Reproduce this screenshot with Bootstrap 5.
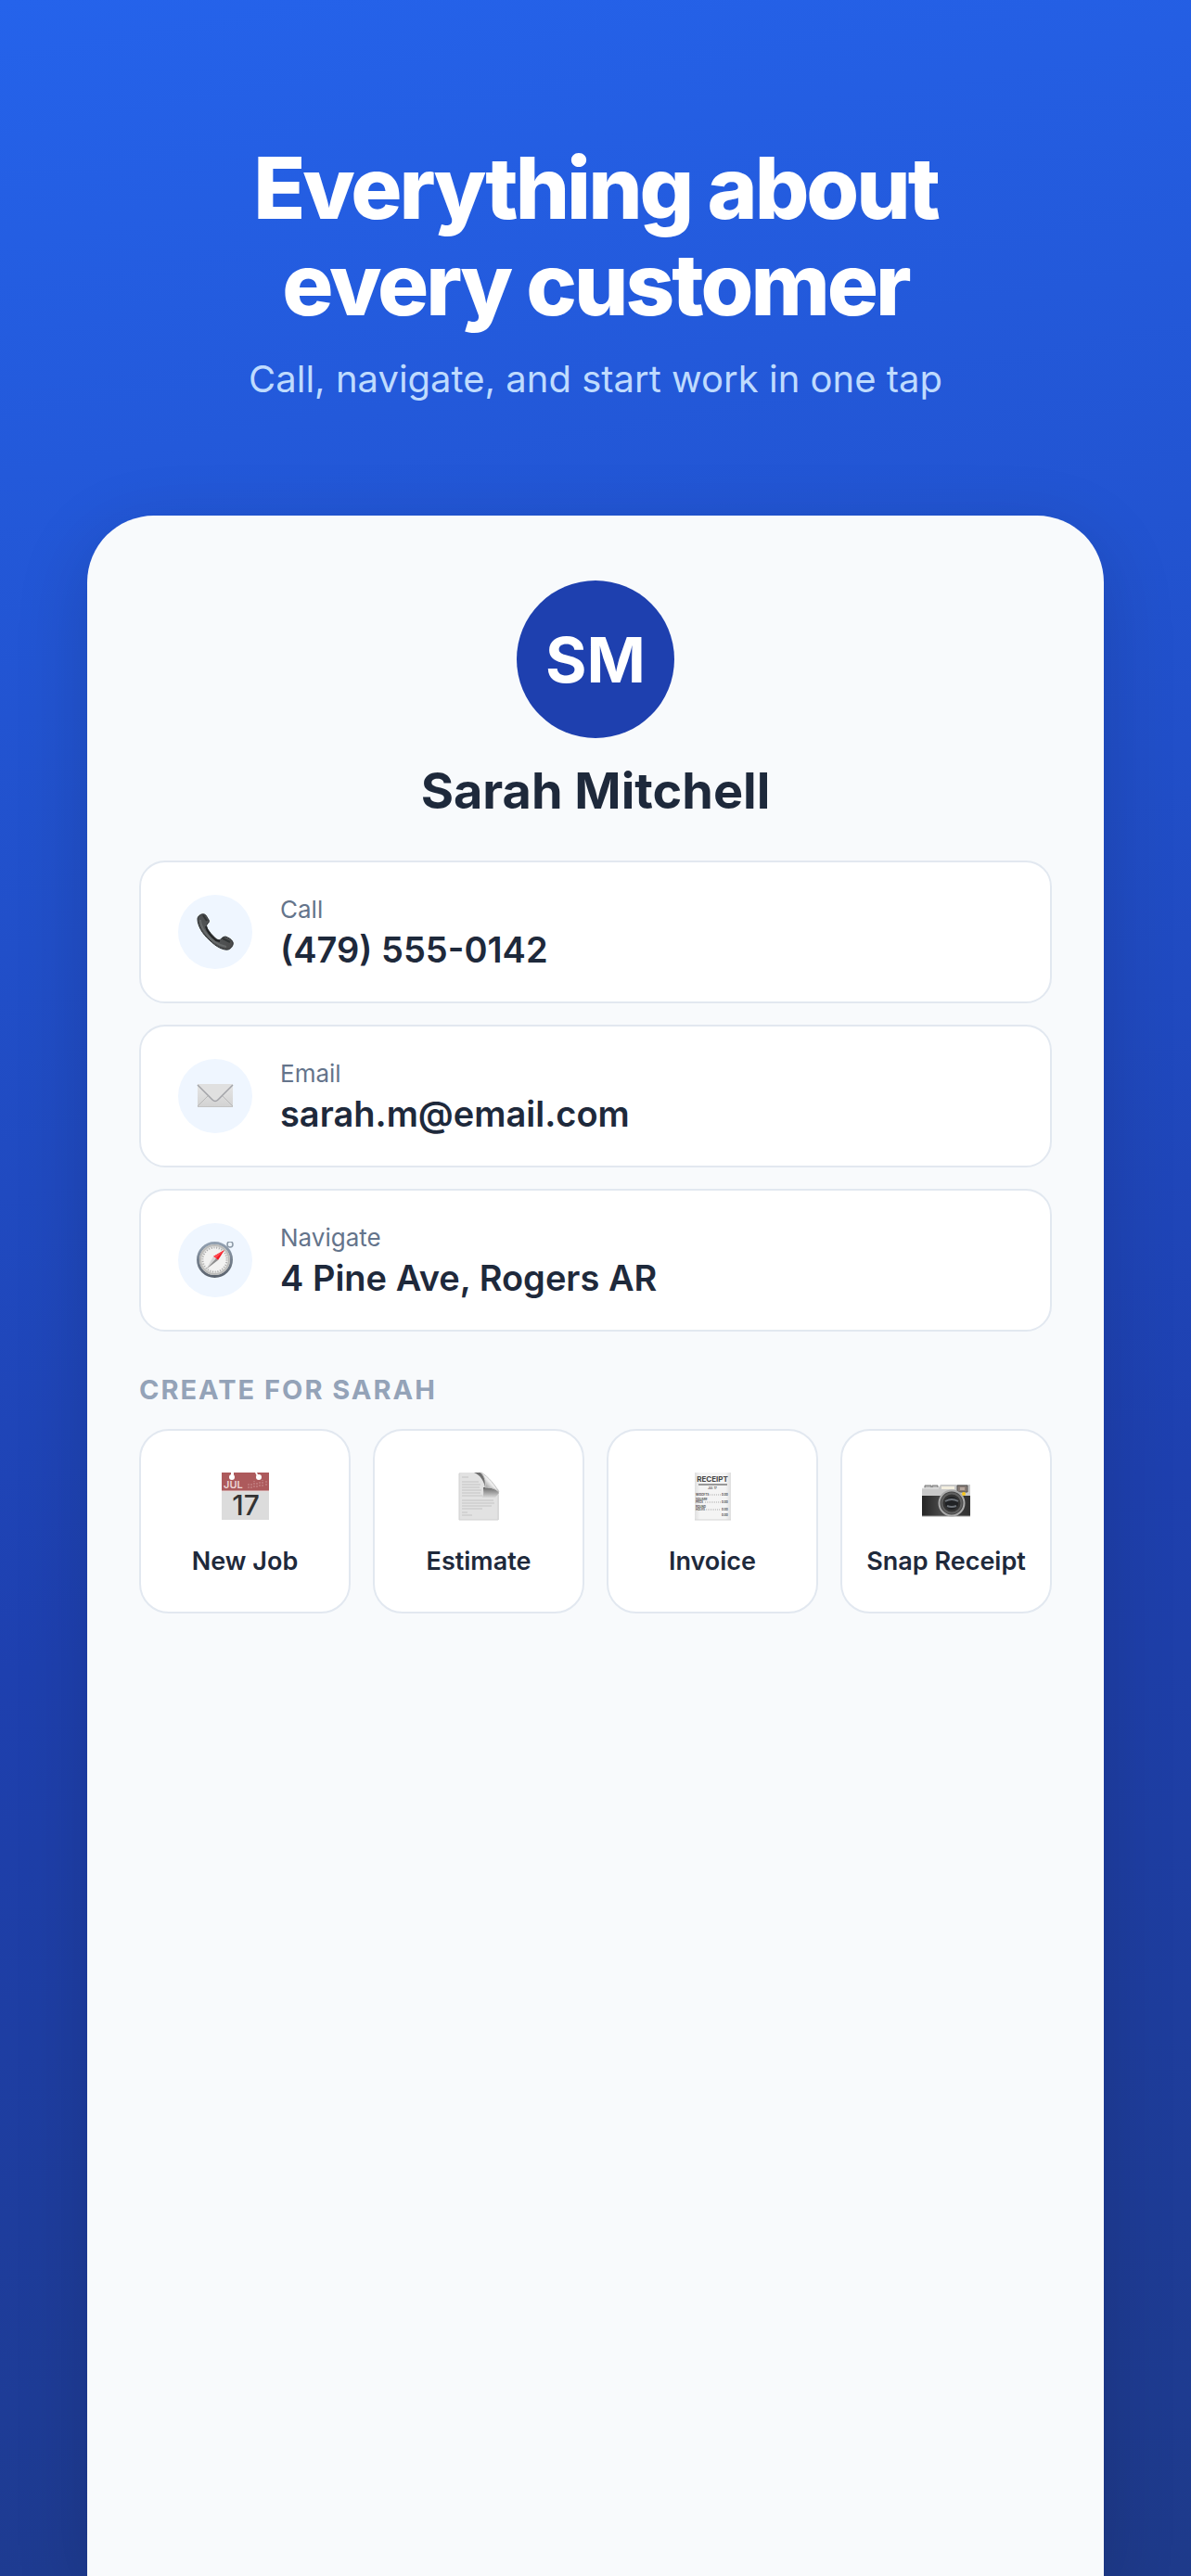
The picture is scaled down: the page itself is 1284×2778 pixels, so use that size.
<!DOCTYPE html>
<html lang="en">
<head>
<meta charset="utf-8">
<meta name="viewport" content="width=device-width, initial-scale=1">
<title>Everything about every customer</title>
<link href="https://cdn.jsdelivr.net/npm/bootstrap@5.3.0/dist/css/bootstrap.min.css" rel="stylesheet">
<style>
body { font-family: Inter, "Liberation Sans", sans-serif; color: #1e293b; background: #1e3a8a; }
.promo { background: linear-gradient(170deg, #2563eb 0%, #1e40af 60%, #1e3a8a 100%); padding: 151px 94px 0; overflow: hidden; }
.promo-title { font-size: 92px; line-height: 104px; font-weight: 800; letter-spacing: -3px; }
.promo-sub { font-size: 40px; line-height: 52px; color: #bfdbfe; margin: 24px 0 121px; }
.sheet { background: #f8fafc; border-radius: 72px 72px 0 0; padding: 70px 56px; box-shadow: 0 20px 80px rgba(0, 0, 0, .15); }
.avatar { width: 170px; height: 170px; background: #1e40af; font-size: 68px; font-weight: 700; }
.person { font-size: 54px; line-height: 68px; font-weight: 700; margin: 23px 0 41px; }
.rows { gap: 23px; }
.contact { background: #fff; border: 2px solid #e2e8f0; border-radius: 28px; padding: 32px 40px; gap: 30px; color: inherit; }
.disc { width: 80px; height: 80px; background: #eff6ff; }
.contact-label { font-size: 26px; line-height: 38px; color: #64748b; }
.contact-value { font-size: 38px; line-height: 48px; font-weight: 600; }
.section-label { font-size: 29px; line-height: 36px; font-weight: 700; letter-spacing: 2px; color: #94a3b8; margin: 45px 0 24px; }
.tiles { --bs-gutter-x: 24px; --bs-gutter-y: 24px; }
.tile { background: #fff; border: 2px solid #e2e8f0; border-radius: 32px; padding: 45px 8px 34px; gap: 24px; color: inherit; font-size: 27px; line-height: 40px; font-weight: 600; white-space: nowrap; }
.tile svg { overflow: visible; }
</style>
</head>
<body>
<main class="promo min-vh-100 d-flex flex-column">
  <header class="text-center text-white">
    <h1 class="promo-title mb-0">Everything about<br>every customer</h1>
    <p class="promo-sub">Call, navigate, and start work in one tap</p>
  </header>
  <section class="sheet flex-grow-1">
    <div class="d-flex flex-column align-items-center">
      <div class="avatar rounded-circle text-white d-flex align-items-center justify-content-center">SM</div>
      <h2 class="person">Sarah Mitchell</h2>
    </div>
    <div class="rows d-flex flex-column">
      <a class="contact d-flex align-items-center text-decoration-none" href="tel:+14795550142">
        <span class="disc rounded-circle d-flex align-items-center justify-content-center flex-shrink-0">
          <svg width="40" height="40" viewBox="0 0 40 40" aria-hidden="true">
            <defs><linearGradient id="ph" x1="0" y1="0" x2="1" y2="1"><stop offset="0" stop-color="#4b4d4e"/><stop offset=".5" stop-color="#55585a"/><stop offset="1" stop-color="#4a4a4a"/></linearGradient></defs>
            <path d="M1 6C1 3 5 0 8 1c2 0 3 3 5 6 1 2 0 3-2 5-1 2 0 4 3 8s7 8 10 9c2 0 3-4 7-4 3 1 7 3 8 6 1 2-1 7-5 8-5 1-13-3-20-10C6 22 1 13 1 6z" fill="url(#ph)" stroke="#2b2d2e"/>
            <path d="M4 7c0 7 5 14 11 20s12 8 17 9" fill="none" stroke="#77797a" stroke-width="2" opacity=".6"/>
            <path d="M10 14c1 5 6 11 11 15l4 1" fill="none" stroke="#232526" stroke-width="2"/>
            <path d="M7 2l4 6M28 27l8 4" stroke="#303334" stroke-width="2"/>
          </svg>
        </span>
        <span class="d-flex flex-column"><span class="contact-label">Call</span><span class="contact-value">(479) 555-0142</span></span>
      </a>
      <a class="contact d-flex align-items-center text-decoration-none" href="mailto:sarah.m@email.com">
        <span class="disc rounded-circle d-flex align-items-center justify-content-center flex-shrink-0">
          <svg width="40" height="40" viewBox="0 0 40 40" aria-hidden="true">
            <defs><linearGradient id="em" x1="0" y1="0" x2="0" y2="1"><stop offset="0" stop-color="#e6e6e6"/><stop offset="1" stop-color="#d2d2d2"/></linearGradient></defs>
            <rect x="1" y="7" width="38" height="25" rx="1" fill="url(#em)"/>
            <path d="M1 31l12-12M39 31L27 19" stroke="#b9b9b9" stroke-width="1"/>
            <path d="M1 7h38L23 24q-3 3-6 0z" fill="#e0e0e0"/>
            <path d="M1 8l16 16q3 3 6 0L39 8" fill="none" stroke="#a2a3a8" stroke-width="1.5"/>
            <path d="M1 31.500h38" stroke="#c4c4c4"/>
          </svg>
        </span>
        <span class="d-flex flex-column"><span class="contact-label">Email</span><span class="contact-value">sarah.m@email.com</span></span>
      </a>
      <a class="contact d-flex align-items-center text-decoration-none" href="#navigate">
        <span class="disc rounded-circle d-flex align-items-center justify-content-center flex-shrink-0">
          <svg width="40" height="40" viewBox="0 0 40 40" aria-hidden="true">
            <defs><linearGradient id="rim" x1="0" y1="0" x2="0" y2="1"><stop offset="0" stop-color="#93a1b1"/><stop offset="1" stop-color="#5b636e"/></linearGradient></defs>
            <circle cx="36" cy="3" r="3" fill="none" stroke="#8c99a6" stroke-width="1.500"/>
            <circle cx="19.500" cy="19.500" r="18" fill="#e4e4e2" stroke="url(#rim)" stroke-width="3"/>
            <circle cx="19.500" cy="19.500" r="15.500" fill="none" stroke="#bcbcba" stroke-width="2"/>
            <circle cx="19.500" cy="19.500" r="13" fill="#f2f2f1" stroke="#aaa" stroke-width="2" stroke-dasharray="1 1.720"/>
            <path d="M30 9L23 20l-5-4z" fill="#f01622"/><path d="M30 9L18 16l3 2z" fill="#ff4a50"/>
            <path d="M10 30l8-14 3 2z" fill="#d6d6d6"/><path d="M10 30l13-10-2-2z" fill="#8e8e8e"/>
          </svg>
        </span>
        <span class="d-flex flex-column"><span class="contact-label">Navigate</span><span class="contact-value">4 Pine Ave, Rogers AR</span></span>
      </a>
    </div>
    <h3 class="section-label">CREATE FOR SARAH</h3>
    <div class="tiles row row-cols-4">
      <div class="col">
        <button type="button" class="tile w-100 d-flex flex-column align-items-center">
          <svg width="52" height="52" viewBox="0 0 52 52" aria-hidden="true">
            <path d="M1 0h51v20H1z" fill="#ad5a5c"/><path d="M1 20h51v31H1z" fill="#dcdcdc"/><path d="M1 20h51" stroke="#e9dcdc"/>
            <circle cx="12" cy="5" r="3" fill="#fff"/><circle cx="41" cy="5" r="3" fill="#fff"/><path d="M11 0h3v4h-3zM37 0h2l2 4h-2z" fill="#fff"/>
            <text x="3" y="17" font-family="Inter, sans-serif" font-size="11" fill="#ecd5d5">JUL</text>
            <path d="M30 17v-6M33 17v-5M36 16v-7M39 16v-6M42 15v-6M45 15V8M49 14V8" stroke="#c98e8f" stroke-dasharray="2 1"/>
            <text x="27" y="46" text-anchor="middle" font-family="Inter, sans-serif" font-size="30" font-weight="500" fill="#333">17</text>
          </svg>
          <span>New Job</span>
        </button>
      </div>
      <div class="col">
        <button type="button" class="tile w-100 d-flex flex-column align-items-center">
          <svg width="52" height="52" viewBox="0 0 52 52" aria-hidden="true">
            <defs>
              <linearGradient id="curl" x1="0" y1="1" x2="1" y2="0"><stop offset=".2" stop-color="#888"/><stop offset=".5" stop-color="#eee"/><stop offset="1" stop-color="#fff"/></linearGradient>
              <linearGradient id="shade" x1="0" y1="0" x2="0" y2="1"><stop offset="0" stop-color="#666"/><stop offset="1" stop-color="#dadada"/></linearGradient>
            </defs>
            <path d="M5 0h24l19 19v32H5z" fill="#e2e2e2"/>
            <path d="M5 1v50h42V24" fill="none" stroke="#d0d0d0"/>
            <path d="M8 5h7M8 10h18M8 13h20M8 16h19M8 19h21M8 22h20M8 25h22M8 30h34M8 33h35M8 36h32M8 39h22M8 43h6M8 46h11" stroke="#c4c4c4"/>
            <path d="M21 0h8c5 3 4 10 4 17-1-8-5-14-12-17z" fill="#707070"/>
            <path d="M31 16c7 0 14 1 17 6l-4 5H30c2-4 1-7 1-11z" fill="url(#shade)"/>
            <path d="M28 0c4 1 13 9 20 21-4-4-9-5-15-5 1-7-1-13-5-16z" fill="url(#curl)" stroke="#c4c4c4"/>
          </svg>
          <span>Estimate</span>
        </button>
      </div>
      <div class="col">
        <button type="button" class="tile w-100 d-flex flex-column align-items-center">
          <svg width="52" height="52" viewBox="0 0 52 52" aria-hidden="true">
            <defs><linearGradient id="rc"><stop offset="0" stop-color="#e0e0e0"/><stop offset=".15" stop-color="#f4f4f4"/><stop offset=".85" stop-color="#f4f4f4"/><stop offset="1" stop-color="#dedede"/></linearGradient></defs>
            <path d="M7 0h39v51H7z" fill="url(#rc)"/><path d="M7 51h39" stroke="#d4d4d4"/>
            <g font-family="Inter, sans-serif" font-weight="700" fill="#555">
              <text x="26" y="10" font-size="8" text-anchor="middle" fill="#444">RECEIPT</text>
              <text x="26" y="18" font-size="3" text-anchor="middle">JUL 17</text>
              <text x="8" y="25" font-size="3">WIDGETS</text><text x="36" y="25" font-size="3">0.00</text>
              <text x="8" y="30" font-size="3">SQUARE</text><text x="8" y="33" font-size="3">PEGS</text><text x="36" y="33" font-size="3">0.00</text>
              <text x="8" y="38" font-size="3">ROUND</text><text x="8" y="41" font-size="3">HOLES</text><text x="36" y="41" font-size="3">0.00</text>
              <text x="36" y="47" font-size="3">0.00</text>
            </g>
            <path d="M11 13h31" stroke="#999" stroke-width="2"/><path d="M22 24h13M18 32h17M19 40h16" stroke="#aaa" stroke-dasharray="1 1"/>
          </svg>
          <span>Invoice</span>
        </button>
      </div>
      <div class="col">
        <button type="button" class="tile w-100 d-flex flex-column align-items-center">
          <svg width="52" height="52" viewBox="0 0 52 52" aria-hidden="true">
            <defs><linearGradient id="cm"><stop offset="0" stop-color="#252525"/><stop offset=".4" stop-color="#4a4a4a"/><stop offset="1" stop-color="#303030"/></linearGradient></defs>
            <path d="M3 14h7v4H3zM11 14h6v4h-6z" fill="#bbb" stroke="#777"/>
            <path d="M0 17l18-1 2-3h32v13H0z" fill="#c9c9c9"/><path d="M0 17h18" stroke="#e8e8e8"/>
            <path d="M0 25h52v22H0z" fill="url(#cm)"/><path d="M0 47h52" stroke="#999"/>
            <path d="M21 15h14v3H21z" fill="#f4efdf"/><path d="M38 14h11v7H38z" fill="#877b75" stroke="#555"/><path d="M41 16h5v3h-5z" fill="#b5a69c"/>
            <circle cx="32" cy="33" r="13.500" fill="#464646" stroke="#aaa" stroke-width="2"/>
            <circle cx="32" cy="33" r="10.500" fill="#333" stroke="#606060" stroke-width="2"/>
            <circle cx="32" cy="33" r="7" fill="#202225"/><path d="M25 31q7-4 14 0M27 36q5 2 10 0" fill="none" stroke="#6d7278" stroke-width="2"/>
            <circle cx="45" cy="23" r="2" fill="#f5c51d"/>
          </svg>
          <span>Snap Receipt</span>
        </button>
      </div>
    </div>
  </section>
</main>
<script src="https://cdn.jsdelivr.net/npm/bootstrap@5.3.0/dist/js/bootstrap.bundle.min.js"></script>
</body>
</html>
